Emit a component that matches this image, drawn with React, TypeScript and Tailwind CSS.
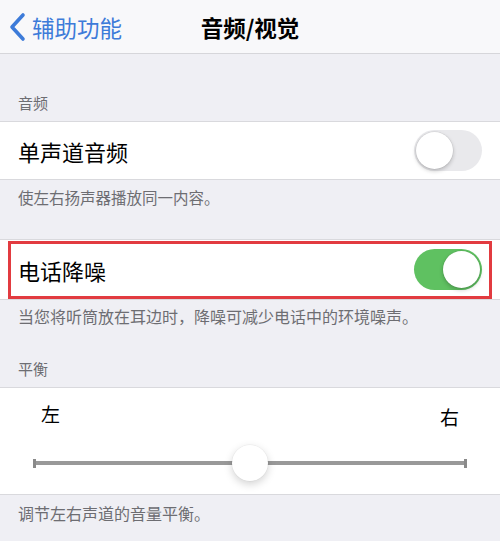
const font = { fontFamily: '"Noto Sans CJK SC", "Noto Sans", sans-serif' };

function Toggle({ on }: { on: boolean }) {
  return (
    <div
      className={`flex h-[41px] w-[68px] items-center rounded-full p-[2px] ${
        on ? "justify-end bg-[#5fc161]" : "justify-start bg-[#e9e9ec]"
      }`}
    >
      <div className="h-[37px] w-[37px] rounded-full bg-white shadow-[0_2px_4px_rgba(0,0,0,0.22),0_0_0_0.5px_rgba(0,0,0,0.08)]" />
    </div>
  );
}

export default function App() {
  return (
    <div className="h-[541px] w-[500px] overflow-hidden bg-[#efeff4]" style={font}>
      {/* nav bar */}
      <div className="grid h-[54px] grid-cols-[1fr_auto_1fr] items-center border-b border-[#d6d6da] bg-[#f8f8fa]">
        <div className="flex items-center pl-[8px]">
          <svg width="20" height="30" viewBox="0 0 20 30" className="mr-[4px]">
            <path
              d="M15 3 L4 15 L15 27"
              fill="none"
              stroke="#3d7bd9"
              strokeWidth="3.6"
              strokeLinecap="round"
              strokeLinejoin="round"
            />
          </svg>
          <span className="text-[22.5px] leading-[30px] text-[#3d7bd9]">辅助功能</span>
        </div>
        <div className="text-[22.5px] font-bold leading-[30px] text-black">音频/视觉</div>
        <div />
      </div>

      {/* 音频 header */}
      <div className="flex h-[67px] items-end px-[18px] pb-[7px] text-[15px] leading-[22px] text-[#6d6d72]">
        音频
      </div>

      <div className="flex h-[59px] items-center justify-between border-y border-[#d9d9dd] bg-white pl-[18px] pr-[18px]">
        <span className="text-[22px] leading-[30px] text-black">单声道音频</span>
        <Toggle on={false} />
      </div>

      <div className="h-[59px] px-[18px] pt-[6px] text-[15.5px] leading-[22px] text-[#6d6d72]">
        使左右扬声器播放同一内容。
      </div>

      <div className="relative flex h-[61px] items-center justify-between border-y border-[#d9d9dd] bg-white pl-[18px] pr-[18px]">
        <span className="text-[22px] leading-[30px] text-black">电话降噪</span>
        <Toggle on={true} />
        <div className="pointer-events-none absolute bottom-[0px] left-[8px] right-[8px] top-[1px] border-[3px] border-[#e23b40]" />
      </div>

      <div className="h-[48px] px-[18px] pt-[5px] text-[16px] leading-[22px] text-[#6d6d72]">
        当您将听筒放在耳边时，降噪可减少电话中的环境噪声。
      </div>

      <div className="flex h-[39px] items-end px-[18px] pb-[7px] text-[15px] leading-[22px] text-[#6d6d72]">
        平衡
      </div>

      {/* balance slider */}
      <div className="flex h-[108px] flex-col border-y border-[#d9d9dd] bg-white">
        <div className="flex justify-between px-[41px] pt-[15px] text-[19px] leading-[22px] text-black">
          <span>左</span>
          <span className="pt-[3px]">右</span>
        </div>
        <div className="relative mx-[33px] mt-[16px] flex h-[38px] items-center">
          <div className="h-[9px] w-[3px] bg-[#8a8a8a]" />
          <div className="h-[4px] flex-1 bg-[#999999]" />
          <div className="h-[9px] w-[3px] bg-[#8a8a8a]" />
          <div className="absolute left-[199px] top-[1px] h-[36px] w-[36px] rounded-full bg-white shadow-[0_3px_8px_rgba(0,0,0,0.18),0_0_0_0.5px_rgba(0,0,0,0.06)]" />
        </div>
      </div>

      <div className="px-[18px] pt-[7px] text-[16px] leading-[22px] text-[#6d6d72]">
        调节左右声道的音量平衡。
      </div>
    </div>
  );
}
